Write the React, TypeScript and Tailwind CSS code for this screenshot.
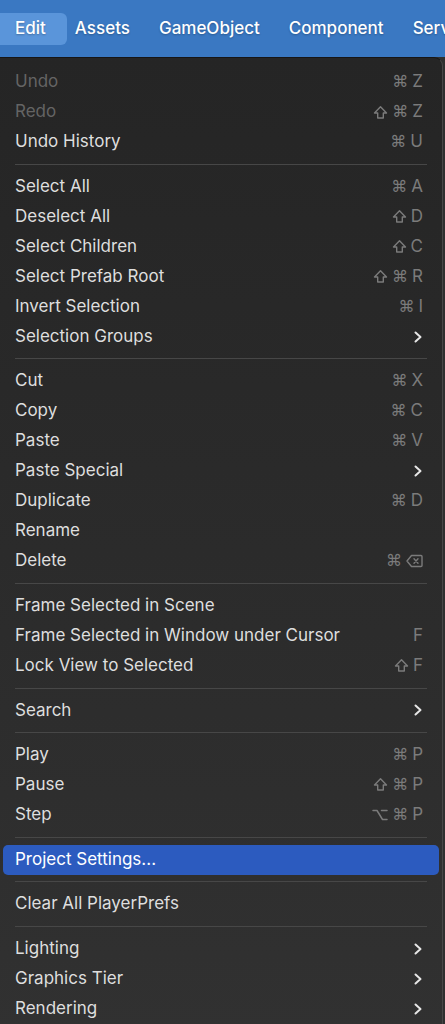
import React from 'react';

type Item =
  | { kind: 'sep' }
  | {
      kind: 'item';
      label: string;
      keys?: string[];
      sub?: boolean;
      disabled?: boolean;
      active?: boolean;
    };

const sep: Item = { kind: 'sep' };
const it = (label: string, keys?: string[], opts: Partial<{ sub: boolean; disabled: boolean; active: boolean }> = {}): Item => ({
  kind: 'item',
  label,
  keys,
  ...opts,
});

const items: Item[] = [
  it('Undo', ['⌘', 'Z'], { disabled: true }),
  it('Redo', ['⇧', '⌘', 'Z'], { disabled: true }),
  it('Undo History', ['⌘', 'U']),
  sep,
  it('Select All', ['⌘', 'A']),
  it('Deselect All', ['⇧', 'D']),
  it('Select Children', ['⇧', 'C']),
  it('Select Prefab Root', ['⇧', '⌘', 'R']),
  it('Invert Selection', ['⌘', 'I']),
  it('Selection Groups', undefined, { sub: true }),
  sep,
  it('Cut', ['⌘', 'X']),
  it('Copy', ['⌘', 'C']),
  it('Paste', ['⌘', 'V']),
  it('Paste Special', undefined, { sub: true }),
  it('Duplicate', ['⌘', 'D']),
  it('Rename'),
  it('Delete', ['⌘', 'DEL']),
  sep,
  it('Frame Selected in Scene'),
  it('Frame Selected in Window under Cursor', ['F']),
  it('Lock View to Selected', ['⇧', 'F']),
  sep,
  it('Search', undefined, { sub: true }),
  sep,
  it('Play', ['⌘', 'P']),
  it('Pause', ['⇧', '⌘', 'P']),
  it('Step', ['⌥', '⌘', 'P']),
  sep,
  it('Project Settings...', undefined, { active: true }),
  sep,
  it('Clear All PlayerPrefs'),
  sep,
  it('Lighting', undefined, { sub: true }),
  it('Graphics Tier', undefined, { sub: true }),
  it('Rendering', undefined, { sub: true }),
];

const keyGrey = '#7b7b7b';

function Chevron() {
  return (
    <svg width="10" height="14" viewBox="0 0 10 14" fill="none">
      <path d="M2.5 2.5 L7.5 7 L2.5 11.5" stroke="#e6e6e6" strokeWidth="2" strokeLinecap="round" strokeLinejoin="round" />
    </svg>
  );
}

function DeleteKey() {
  return (
    <svg width="17" height="14" viewBox="0 0 17 14" fill="none">
      <path d="M5.5 1.5 H15 a1 1 0 0 1 1 1 V11.5 a1 1 0 0 1 -1 1 H5.5 L1 7 Z" stroke={keyGrey} strokeWidth="1.4" strokeLinejoin="round" />
      <path d="M8 4.8 L12 9.2 M12 4.8 L8 9.2" stroke={keyGrey} strokeWidth="1.4" strokeLinecap="round" />
    </svg>
  );
}

function ShiftKey() {
  return (
    <svg width="15" height="15" viewBox="0 0 15 15" fill="none">
      <path d="M7.5 1.8 L13.5 8 H10.3 V13 H4.7 V8 H1.5 Z" stroke={keyGrey} strokeWidth="1.4" strokeLinejoin="round" />
    </svg>
  );
}

function OptionKey() {
  return (
    <svg width="16" height="14" viewBox="0 0 16 14" fill="none">
      <path d="M1 2.5 H5 L10.5 11.5 H15 M9.5 2.5 H15" stroke={keyGrey} strokeWidth="1.5" strokeLinecap="round" strokeLinejoin="round" />
    </svg>
  );
}

function Keys({ keys }: { keys: string[] }) {
  return (
    <div className="flex items-center gap-[4px] text-[#7b7b7b]">
      {keys.map((k, i) => {
        if (k === 'DEL') return <DeleteKey key={i} />;
        if (k === '⇧') return <ShiftKey key={i} />;
        if (k === '⌥') return <OptionKey key={i} />;
        if (k === '⌘')
          return (
            <span key={i} className="text-[16px] leading-none font-['DejaVu_Sans',sans-serif]">
              {k}
            </span>
          );
        return (
          <span key={i} className="text-[17px]">
            {k}
          </span>
        );
      })}
    </div>
  );
}

export default function App() {
  return (
    <div className="min-h-[1024px] w-[445px] overflow-hidden bg-[#2f2f2f] font-['Inter','Noto_Sans',sans-serif]">
      <div className="flex h-[57px] items-center bg-[#3a78c2] text-[17px] font-medium text-white [text-shadow:0_1px_2px_rgba(0,0,0,0.25)]">
        <div className="flex h-[32px] items-center rounded-r-[6px] bg-[#5a95da] pl-[15px] pr-[21px]">Edit</div>
        <div className="ml-[8px] flex gap-[29px] whitespace-nowrap">
          <span>Assets</span>
          <span>GameObject</span>
          <span>Component</span>
          <span>Services</span>
        </div>
      </div>
      <div className="w-[443px] rounded-tr-[9px] border-t border-r border-t-[#161616] border-r-[#474747] bg-gradient-to-b from-[#252525] to-[#313131] pb-[10px] pt-[9px]">
        {items.map((item, i) =>
          item.kind === 'sep' ? (
            <div key={i} className="flex h-[14.6px] items-center px-[15px]">
              <div className="h-px w-full bg-[#474747]" />
            </div>
          ) : (
            <div
              key={i}
              className={`mx-[3px] flex h-[30px] items-center justify-between rounded-[5px] pl-[12px] pr-[16px] text-[17px] ${
                item.active ? 'bg-[#2c5bbf] text-white' : item.disabled ? 'text-[#646464]' : 'text-[#dedede]'
              }`}
            >
              <span className="whitespace-nowrap">{item.label}</span>
              {item.keys && <Keys keys={item.keys} />}
              {item.sub && <Chevron />}
            </div>
          ),
        )}
      </div>
    </div>
  );
}
